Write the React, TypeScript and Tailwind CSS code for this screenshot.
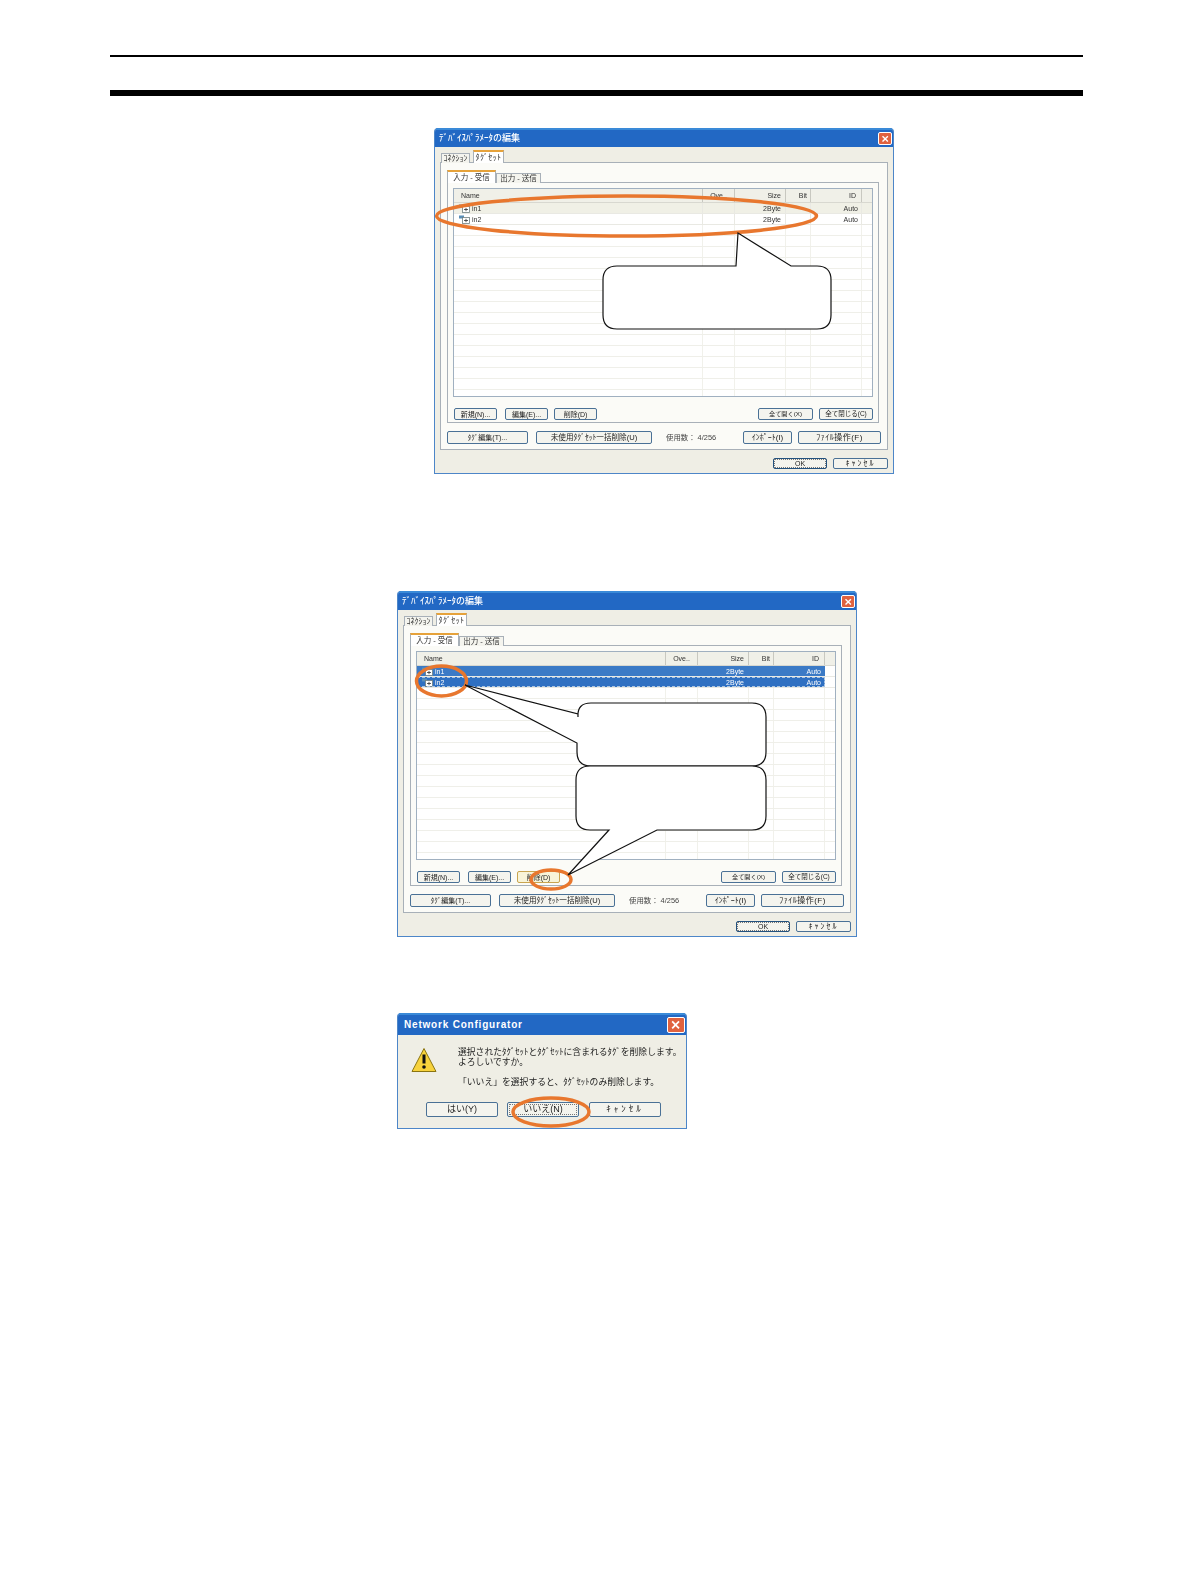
import React from "react";

const FONT = "font-['Liberation_Sans','Noto_Sans_CJK_JP',sans-serif]";

function Btn({ w, label, text = "text-[7px]", cls = "" }: { w: string; label: string; text?: string; cls?: string }) {
  return (
    <div className={`${w} ${text} h-full shrink-0 flex items-center justify-center rounded-[2px] border border-[#4a7196] bg-[#f4f4ee] leading-none text-[#222] ${cls}`}>
      {label}
    </div>
  );
}

function CloseBtn({ cls }: { cls: string }) {
  return (
    <div className={`${cls} rounded-[2px] border border-white bg-[#e0623f] flex items-center justify-center`}>
      <svg viewBox="0 0 10 10" className="w-[70%] h-[70%]">
        <path d="M1.5 1.5L8.5 8.5M8.5 1.5L1.5 8.5" stroke="#fff" strokeWidth="1.8" />
      </svg>
    </div>
  );
}

function TreeIcon() {
  return (
    <svg viewBox="0 0 13 9" className="w-[13px] h-[9px] shrink-0">
      <rect x="0" y="0.5" width="5" height="3" fill="#5b8fb8" />
      <rect x="3.5" y="2.5" width="7" height="6" fill="#fff" stroke="#6f7f80" strokeWidth="0.8" />
      <path d="M5 5.5H9M7 3.8V7.2" stroke="#333" strokeWidth="0.8" />
    </svg>
  );
}

const cols = ["w-[249px]", "w-[32px]", "w-[51px]", "w-[25px]", "w-[51px]", "flex-1"];

function Row({ name, bg, selected, focus }: { name: string; bg: string; selected?: boolean; focus?: boolean }) {
  const t = selected ? "text-white" : "text-[#333]";
  const line = selected ? "border-transparent" : "border-[#e9e9e3]";
  return (
    <div className={`flex h-[11px] shrink-0 border-b border-[#e9e9e3] text-[7px] leading-none ${selected ? "" : bg} ${t}`}>
      <div className={`flex ${selected ? bg : ""} ${focus ? "outline-1 outline-dashed outline-[#a9c4e2] -outline-offset-1" : ""}`}>
        <div className={`${cols[0]} border-r ${line} flex items-center pl-[5px]`}>
          <TreeIcon />
          <span>{name}</span>
        </div>
        <div className={`${cols[1]} border-r ${line}`} />
        <div className={`${cols[2]} border-r ${line} flex items-center justify-end pr-[4px]`}>2Byte</div>
        <div className={`${cols[3]} border-r ${line}`} />
        <div className={`${cols[4]} border-r ${line} flex items-center justify-end pr-[3px]`}>Auto</div>
      </div>
      <div className={cols[5]} />
    </div>
  );
}

function EmptyRow() {
  return (
    <div className="flex h-[11px] shrink-0 border-b border-[#efefe9]">
      <div className={`${cols[0]} border-r border-[#f1f1eb]`} />
      <div className={`${cols[1]} border-r border-[#f1f1eb]`} />
      <div className={`${cols[2]} border-r border-[#f1f1eb]`} />
      <div className={`${cols[3]} border-r border-[#f1f1eb]`} />
      <div className={`${cols[4]} border-r border-[#f1f1eb]`} />
      <div className={cols[5]} />
    </div>
  );
}

function DeviceDialog({ selected, children }: { selected?: boolean; children: React.ReactNode }) {
  return (
    <div className={`relative w-[460px] h-[346px] flex flex-col ${FONT}`}>
      <div className="flex-1 flex flex-col rounded-t-[4px] border border-t-0 border-[#4d86c8] bg-[#efeee5] blur-[0.45px] overflow-hidden">
        <div className="h-[19px] shrink-0 flex items-center justify-between pl-[4px] pr-[1px] bg-[#2268c4] border-t-2 border-[#3a8ad8]">
          <span className="text-[9px] leading-none font-medium text-white">ﾃﾞﾊﾞｲｽﾊﾟﾗﾒｰﾀの編集</span>
          <CloseBtn cls="w-[14px] h-[13px]" />
        </div>
        <div className="flex-1 flex flex-col pl-[5px] pr-[5px] pt-[3px]">
          <div className="flex items-end h-[13px] pl-[1px] relative z-10 -mb-[1px] text-[8px] leading-none text-[#333]">
            <div className="w-[29px] h-[10px] flex items-center justify-center border border-b-0 border-[#a8b0b8] bg-[#f4f4ee]">ｺﾈｸｼｮﾝ</div>
            <div className="ml-[3px] w-[31px] h-[13px] flex items-center justify-center border border-b-0 border-[#a8b0b8] border-t-2 border-t-[#e6a23a] bg-white tracking-[0.4px]">ﾀｸﾞｾｯﾄ</div>
          </div>
          <div className="h-[288px] flex flex-col border border-[#a8b0b8] bg-[#fbfbf7] px-[6px] pt-[7px]">
            <div className="flex items-end h-[13px] relative z-10 -mb-[1px] text-[7.5px] leading-none text-[#333]">
              <div className="w-[49px] h-[13px] flex items-center justify-center border border-b-0 border-[#a8b0b8] border-t-2 border-t-[#e6a23a] bg-white">入力 - 受信</div>
              <div className="w-[45px] h-[10px] flex items-center justify-center border border-b-0 border-[#a8b0b8] bg-[#f4f4ee]">出力 - 送信</div>
            </div>
            <div className="h-[241px] w-[432px] flex flex-col border border-[#a8b0b8] bg-[#fbfbf7] pt-[5px]">
              <div className="ml-[5px] w-[420px] h-[209px] border border-[#a0b0c0] bg-white flex flex-col overflow-hidden">
                <div className="flex h-[14px] shrink-0 bg-[#f0f0e8] border-b border-[#d8d8d0] text-[7px] leading-none text-[#333]">
                  <div className={`${cols[0]} border-r border-[#c8c8c0] flex items-center pl-[7px]`}>Name</div>
                  <div className={`${cols[1]} border-r border-[#c8c8c0] flex items-center justify-center`}>Ove..</div>
                  <div className={`${cols[2]} border-r border-[#c8c8c0] flex items-center justify-end pr-[4px]`}>Size</div>
                  <div className={`${cols[3]} border-r border-[#c8c8c0] flex items-center justify-end pr-[3px]`}>Bit</div>
                  <div className={`${cols[4]} border-r border-[#c8c8c0] flex items-center justify-end pr-[5px]`}>ID</div>
                  <div className={cols[5]} />
                </div>
                <Row name="in1" bg={selected ? "bg-[#3b7ac6]" : "bg-[#f0f0e6]"} selected={selected} />
                <Row name="in2" bg={selected ? "bg-[#2f70c2]" : "bg-white"} selected={selected} focus={selected} />
                {Array.from({ length: 16 }).map((_, i) => (
                  <EmptyRow key={i} />
                ))}
              </div>
              <div className="mt-[11px] h-[12px] flex pl-[6px] pr-[5px]">
                <Btn w="w-[43px]" label="新規(N)..." />
                <Btn w="w-[43px] ml-[8px]" label="編集(E)..." />
                <Btn w="w-[43px] ml-[6px]" label="削除(D)" cls={selected ? "border-[#c9a550] bg-[#f8f4d8]" : ""} />
                <Btn w="w-[55px] ml-auto" text="text-[6.2px]" label="全て開く(X)" />
                <Btn w="w-[54px] ml-[6px]" text="text-[6.5px]" label="全て閉じる(C)" />
              </div>
            </div>
            <div className="mt-[8px] h-[13px] flex items-center">
              <Btn w="w-[81px]" label="ﾀｸﾞ編集(T)..." />
              <Btn w="w-[116px] ml-[8px]" text="text-[7.6px]" label="未使用ﾀｸﾞｾｯﾄ一括削除(U)" />
              <span className="ml-[14px] w-[77px] text-[7.4px] leading-none text-[#444]">使用数： 4/256</span>
              <Btn w="w-[49px]" text="text-[8px]" label="ｲﾝﾎﾟｰﾄ(I)" />
              <Btn w="w-[83px] ml-[6px]" text="text-[8px] tracking-[0.5px]" label="ﾌｧｲﾙ操作(F)" />
            </div>
          </div>
          <div className="mt-[8px] h-[11px] flex justify-end">
            <Btn w="w-[54px]" label="OK" cls="border-[#23527f] outline-1 outline-dotted outline-[#777] -outline-offset-2" />
            <Btn w="w-[55px] ml-[6px]" text="text-[8px] tracking-[2px]" label="ｷｬﾝｾﾙ" />
          </div>
        </div>
      </div>
      {children}
    </div>
  );
}

function Overlay({ w, h, children }: { w: number; h: number; children: React.ReactNode }) {
  return (
    <svg viewBox={`0 0 ${w} ${h}`} className="absolute inset-0 w-full h-full pointer-events-none" fill="none">
      {children}
    </svg>
  );
}

const ORANGE = "#e8772e";

export default function App() {
  return (
    <div className="min-h-[1586px] w-[1190px] bg-white pt-[55px] pl-[110px]">
      <div className="w-[973px] h-[2px] bg-black" />
      <div className="w-[973px] h-[6px] bg-black mt-[33px]" />

      <div className="mt-[32px] ml-[324px]">
        <DeviceDialog>
          <Overlay w={460} h={346}>
            <ellipse cx="192.5" cy="88" rx="190" ry="20" stroke={ORANGE} strokeWidth="3.5" />
            <path
              d="M183 138H302L304 105L357 138H383Q397 138 397 152V187Q397 201 383 201H183Q169 201 169 187V152Q169 138 183 138Z"
              fill="#fff"
              stroke="#111"
              strokeWidth="1.2"
            />
          </Overlay>
        </DeviceDialog>
      </div>

      <div className="mt-[117px] ml-[287px]">
        <DeviceDialog selected>
          <Overlay w={460} h={346}>
            <ellipse cx="44.5" cy="90" rx="25" ry="15" stroke={ORANGE} strokeWidth="3.5" />
            <ellipse cx="154" cy="288.5" rx="20" ry="9.5" stroke={ORANGE} strokeWidth="3.5" />
            <path
              d="M194 112H355Q369 112 369 126V161Q369 175 355 175H194Q180 175 180 161V152L68 94L181 123V126Q180 112 194 112Z"
              fill="#fff"
              stroke="#111"
              strokeWidth="1.2"
            />
            <path
              d="M193 175H355Q369 175 369 189V225Q369 239 355 239H260L171 284L212 239H193Q179 239 179 225V189Q179 175 193 175Z"
              fill="#fff"
              stroke="#111"
              strokeWidth="1.2"
            />
          </Overlay>
        </DeviceDialog>
      </div>

      <div className="mt-[76px] ml-[287px]">
        <div className={`relative w-[290px] h-[116px] flex flex-col ${FONT}`}>
          <div className="flex-1 flex flex-col rounded-t-[4px] border border-t-0 border-[#4d86c8] bg-[#efeee5] blur-[0.45px] overflow-hidden">
            <div className="h-[22px] shrink-0 flex items-center justify-between pl-[6px] pr-[1px] bg-[#2268c4] border-t-2 border-[#3a8ad8]">
              <span className="text-[10px] leading-none font-bold tracking-[0.8px] text-white">Network Configurator</span>
              <CloseBtn cls="w-[18px] h-[16px]" />
            </div>
            <div className="flex-1 flex flex-col">
              <div className="flex pl-[13px] pt-[12px]">
                <svg viewBox="0 0 26 26" className="w-[26px] h-[26px] shrink-0">
                  <path d="M13 1.5L25 24.5H1Z" fill="#f7d23c" stroke="#8a7410" strokeWidth="1" strokeLinejoin="round" />
                  <path d="M13 7.5V16.5" stroke="#111" strokeWidth="3" />
                  <circle cx="13" cy="20" r="1.8" fill="#111" />
                </svg>
                <div className="ml-[21px] flex flex-col text-[8.8px] leading-[10px] text-[#222]">
                  <span className="whitespace-nowrap">選択されたﾀｸﾞｾｯﾄとﾀｸﾞｾｯﾄに含まれるﾀｸﾞを削除します。</span>
                  <span className="whitespace-nowrap">よろしいですか。</span>
                  <span className="whitespace-nowrap mt-[10px]">「いいえ」を選択すると、ﾀｸﾞｾｯﾄのみ削除します。</span>
                </div>
              </div>
              <div className="mt-[15px] h-[15px] flex pl-[28px] text-[9px] leading-none">
                <div className="w-[72px] flex items-center justify-center rounded-[2px] border border-[#4a7196] bg-[#f4f4ee] text-[#222]">はい(Y)</div>
                <div className="ml-[9px] w-[72px] flex items-center justify-center rounded-[2px] border border-[#4a7196] bg-[#f4f4ee] text-[#222] outline-1 outline-dotted outline-[#777] -outline-offset-3">いいえ(N)</div>
                <div className="ml-[10px] w-[72px] flex items-center justify-center rounded-[2px] border border-[#4a7196] bg-[#f4f4ee] text-[#222] tracking-[3px]">ｷｬﾝｾﾙ</div>
              </div>
            </div>
          </div>
          <Overlay w={290} h={116}>
            <ellipse cx="154" cy="99" rx="38" ry="14" stroke={ORANGE} strokeWidth="3.5" />
          </Overlay>
        </div>
      </div>
    </div>
  );
}
